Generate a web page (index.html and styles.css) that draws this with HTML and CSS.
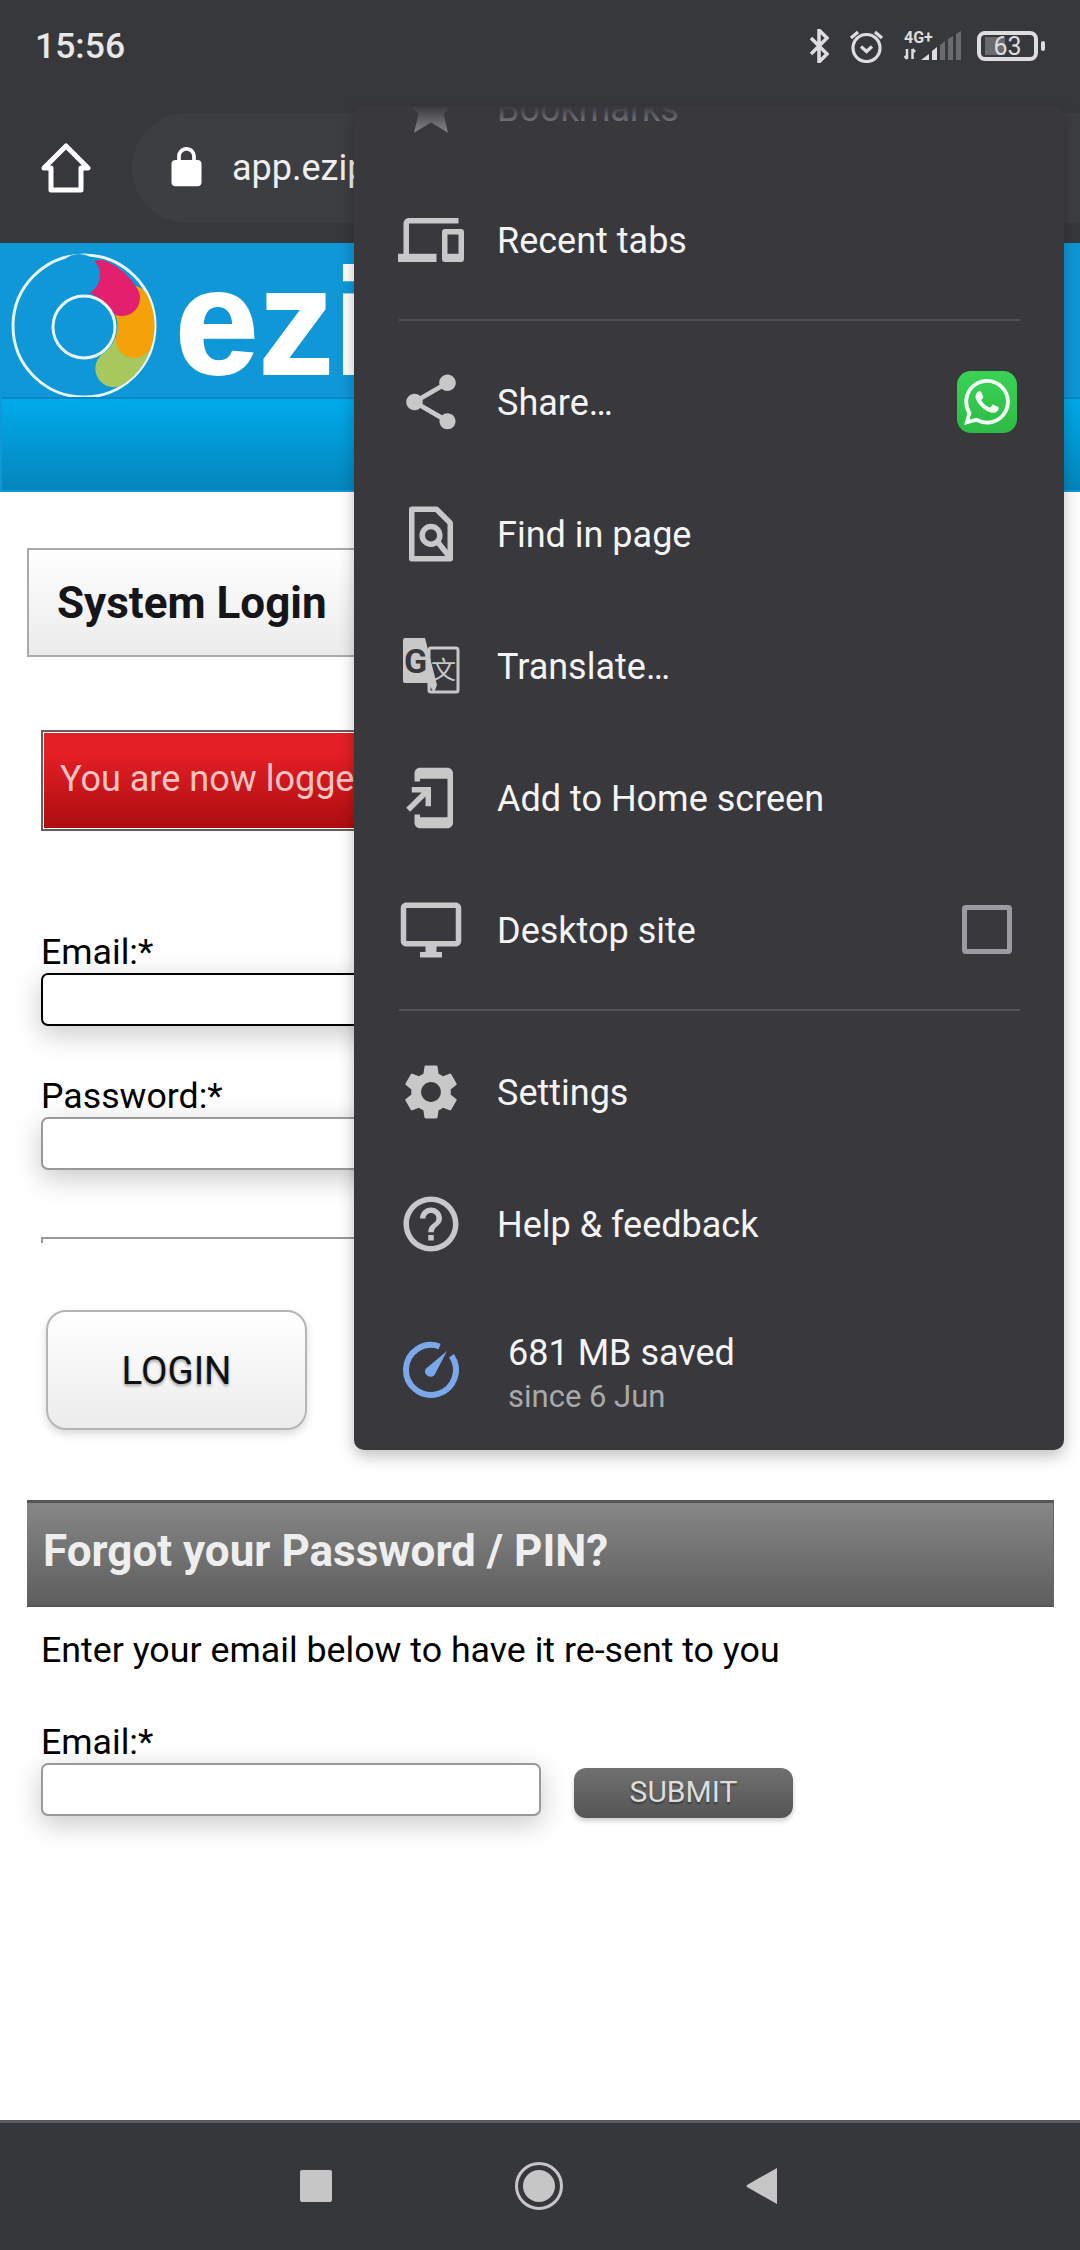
FILE: index.html
```html
<!DOCTYPE html>
<html lang="en">
<head>
    <meta charset="UTF-8">
    <meta name="viewport" content="width=device-width, initial-scale=1.0">
    <title>System Login</title>
    <link rel="stylesheet" href="styles.css">
</head>
<body>
    <div class="phone">
        <div class="status-bar">
            <span class="clock">15:56</span>
            <div class="status-icons">
                <svg class="icon-bt" viewBox="0 0 20 34"><path d="M2 9 18 25 10 33V1L18 9 2 25"/></svg>
                <svg class="icon-alarm" viewBox="0 0 35 34"><circle cx="17.5" cy="19" r="13.5"/><path d="M12 17.5 17.5 22.5 23 17.5M2 9 9 3M33 9 26 3"/></svg>
                <svg class="icon-signal" viewBox="0 0 58 34">
                    <text x="0" y="14">4G+</text>
                    <path class="arrows" d="M3 20V30M0.5 27 3 30M8.5 30V20M8.5 20 11 23"/>
                    <path class="on" d="M17 31l8-6v6zM28 31V22l5-4v13z"/>
                    <path class="off" d="M36 31V16l5-4v19zM44 31V10l5-3v24zM52 31V5l5-3v29z"/>
                </svg>
                <div class="battery"><span class="battery-fill"></span><span class="battery-num">63</span></div>
            </div>
        </div>

        <div class="toolbar">
            <svg class="icon-home" viewBox="0 0 50 50"><path d="M3 25 25 3 47 25H40V47H10V25Z"/></svg>
            <div class="omnibox">
                <svg class="icon-lock" viewBox="0 0 24 24"><path d="M18 8h-1V6c0-2.76-2.24-5-5-5S7 3.24 7 6v2H6c-1.1 0-2 .9-2 2v10c0 1.1.9 2 2 2h12c1.1 0 2-.9 2-2V10c0-1.1-.9-2-2-2zM9 6c0-1.66 1.34-3 3-3s3 1.34 3 3v2H9V6z"/></svg>
                <span class="url">app.ezip</span>
            </div>
        </div>

        <header class="site-header">
            <div class="brand">
                <svg class="logo" viewBox="0 0 150 150">
                    <circle class="logo-disc" cx="75" cy="75" r="71"/>
                    <path class="blob-green" d="M123.9 92.8A52 52 0 0 1 104.8 117.6"/>
                    <path class="blob-orange" d="M122.1 53A52 52 0 0 1 125.2 88.5"/>
                    <path class="blob-pink" d="M91 27A50 50 0 0 1 113 47"/>
                    <circle class="logo-cap" cx="70" cy="24" r="21"/>
                    <circle class="logo-hole" cx="75" cy="76" r="31"/>
                </svg>
                <span class="brand-name">ezi</span>
            </div>
            <div class="site-nav"></div>
        </header>

        <main class="content">
            <h1 class="page-title">System Login</h1>
            <div class="message">You are now logged in</div>

            <form class="login-form">
                <label class="field-label">Email:*</label>
                <input class="text-input focused" type="text">
                <label class="field-label next">Password:*</label>
                <input class="text-input" type="password">
                <div class="clipped-field"></div>
                <button class="login-btn" type="button">LOGIN</button>
            </form>

            <h2 class="forgot-title">Forgot your Password / PIN?</h2>
            <p class="forgot-text">Enter your email below to have it re-sent to you</p>
            <form class="forgot-form">
                <label class="field-label">Email:*</label>
                <div class="forgot-row">
                    <input class="text-input" type="text">
                    <button class="submit-btn" type="button">SUBMIT</button>
                </div>
            </form>
        </main>

        <nav class="nav-bar">
            <span class="nav-square"></span>
            <span class="nav-circle"><span></span></span>
            <svg class="nav-back" viewBox="0 0 31 36"><path d="M31 0V36L1 19Q0 18 1 17Z"/></svg>
        </nav>

        <div class="menu">
            <ul class="menu-list">
                <li class="menu-row">
                    <svg class="menu-icon" viewBox="0 0 24 24"><path d="M12 17.27L18.18 21l-1.64-6.97L22 9.24l-7.19-.61L12 2 9.19 8.63 2 9.24l5.46 4.79L5.82 21z"/></svg>
                    <span class="menu-label">Bookmarks</span>
                </li>
                <li class="menu-row">
                    <svg class="menu-icon" viewBox="0 0 24 24"><path d="M4 6h18V4H4c-1.1 0-2 .9-2 2v11H0v3h14v-3H4V6zm19 2h-6c-.55 0-1 .45-1 1v10c0 .55.45 1 1 1h6c.55 0 1-.45 1-1V9c0-.55-.45-1-1-1zm-1 9h-4v-7h4v7z"/></svg>
                    <span class="menu-label">Recent tabs</span>
                </li>
                <li class="menu-divider"></li>
                <li class="menu-row">
                    <svg class="menu-icon" viewBox="0 0 24 24"><path d="M18 16.08c-.76 0-1.44.3-1.96.77L8.91 12.7c.05-.23.09-.46.09-.7s-.04-.47-.09-.7l7.05-4.11c.54.5 1.25.81 2.04.81 1.66 0 3-1.34 3-3s-1.34-3-3-3-3 1.34-3 3c0 .24.04.47.09.7L8.04 9.81C7.5 9.31 6.79 9 6 9c-1.66 0-3 1.34-3 3s1.34 3 3 3c.79 0 1.5-.31 2.04-.81l7.12 4.16c-.05.21-.08.43-.08.65 0 1.61 1.31 2.92 2.92 2.92 1.61 0 2.92-1.31 2.92-2.92s-1.31-2.92-2.92-2.92z"/></svg>
                    <span class="menu-label">Share…</span>
                    <span class="whatsapp">
                        <svg viewBox="0 0 24 24"><path d="M17.472 14.382c-.297-.149-1.758-.867-2.03-.967-.273-.099-.471-.148-.67.15-.197.297-.767.966-.94 1.164-.173.199-.347.223-.644.075-.297-.15-1.255-.463-2.39-1.475-.883-.788-1.48-1.761-1.653-2.059-.173-.297-.018-.458.13-.606.134-.133.298-.347.446-.52.149-.174.198-.298.298-.497.099-.198.05-.371-.025-.52-.075-.149-.669-1.612-.916-2.207-.242-.579-.487-.5-.669-.51-.173-.008-.371-.01-.57-.01-.198 0-.52.074-.792.372-.272.297-1.04 1.016-1.04 2.479 0 1.462 1.065 2.875 1.213 3.074.149.198 2.096 3.2 5.077 4.487.709.306 1.262.489 1.694.625.712.227 1.36.195 1.871.118.571-.085 1.758-.719 2.006-1.413.248-.694.248-1.289.173-1.413-.074-.124-.272-.198-.57-.347m-5.421 7.403h-.004a9.87 9.87 0 01-5.031-1.378l-.361-.214-3.741.982.998-3.648-.235-.374a9.86 9.86 0 01-1.51-5.26c.001-5.45 4.436-9.884 9.888-9.884 2.64 0 5.122 1.03 6.988 2.898a9.825 9.825 0 012.893 6.994c-.003 5.45-4.437 9.884-9.885 9.884m8.413-18.297A11.815 11.815 0 0012.05 0C5.495 0 .16 5.335.157 11.892c0 2.096.547 4.142 1.588 5.945L.057 24l6.305-1.654a11.882 11.882 0 005.683 1.448h.005c6.554 0 11.89-5.335 11.893-11.893a11.821 11.821 0 00-3.48-8.413z"/></svg>
                    </span>
                </li>
                <li class="menu-row">
                    <svg class="menu-icon icon-find" viewBox="0 0 24 24"><path d="M5 3h9l5 5v13H5z"/><circle cx="12" cy="12.5" r="3.2"/><path d="M14.5 15 18.5 20"/></svg>
                    <span class="menu-label">Find in page</span>
                </li>
                <li class="menu-row">
                    <svg class="menu-icon icon-translate" viewBox="0 0 66 66">
                        <rect class="tr-back" x="31" y="15" width="29" height="44" rx="2"/>
                        <path class="tr-front" d="M7 5H27L39 52 36 60 30 50H7Q5 50 5 48V7Q5 5 7 5Z"/>
                        <text class="tr-g" x="6" y="40">G</text>
                        <text class="tr-zh" x="33" y="46">文</text>
                    </svg>
                    <span class="menu-label">Translate…</span>
                </li>
                <li class="menu-row">
                    <svg class="menu-icon" viewBox="0 0 24 24"><path d="M18 1.01L8 1c-1.1 0-2 .9-2 2v3h2V5h10v14H8v-1H6v3c0 1.1.9 2 2 2h10c1.1 0 2-.9 2-2V3c0-1.1-.9-1.99-2-1.99zM10 15h2V8H5v2h3.59L3 15.59 4.41 17 10 11.41V15z"/></svg>
                    <span class="menu-label">Add to Home screen</span>
                </li>
                <li class="menu-row">
                    <svg class="menu-icon" viewBox="0 0 24 24"><path d="M21 2H3c-1.1 0-2 .9-2 2v12c0 1.1.9 2 2 2h7v2H8v2h8v-2h-2v-2h7c1.1 0 2-.9 2-2V4c0-1.1-.9-2-2-2zm0 14H3V4h18v12z"/></svg>
                    <span class="menu-label">Desktop site</span>
                    <span class="checkbox"></span>
                </li>
                <li class="menu-divider"></li>
                <li class="menu-row">
                    <svg class="menu-icon" viewBox="0 0 24 24"><path d="M19.14 12.94c.04-.3.06-.61.06-.94 0-.32-.02-.64-.07-.94l2.03-1.58c.18-.14.23-.41.12-.61l-1.92-3.32c-.12-.22-.37-.29-.59-.22l-2.39.96c-.5-.38-1.03-.7-1.62-.94l-.36-2.54c-.04-.24-.24-.41-.48-.41h-3.84c-.24 0-.43.17-.47.41l-.36 2.54c-.59.24-1.13.57-1.62.94l-2.39-.96c-.22-.08-.47 0-.59.22L2.74 8.87c-.12.21-.08.47.12.61l2.03 1.58c-.05.3-.09.63-.09.94s.02.64.07.94l-2.03 1.58c-.18.14-.23.41-.12.61l1.92 3.32c.12.22.37.29.59.22l2.39-.96c.5.38 1.03.7 1.62.94l.36 2.54c.05.24.24.41.48.41h3.84c.24 0 .44-.17.47-.41l.36-2.54c.59-.24 1.13-.56 1.62-.94l2.39.96c.22.08.47 0 .59-.22l1.92-3.32c.12-.22.07-.47-.12-.61l-2.01-1.58zM12 15.6c-1.98 0-3.6-1.62-3.6-3.6s1.62-3.6 3.6-3.6 3.6 1.62 3.6 3.6-1.62 3.6-3.6 3.6z"/></svg>
                    <span class="menu-label">Settings</span>
                </li>
                <li class="menu-row">
                    <svg class="menu-icon" viewBox="0 0 24 24"><path d="M11 18h2v-2h-2v2zm1-16C6.48 2 2 6.48 2 12s4.48 10 10 10 10-4.48 10-10S17.52 2 12 2zm0 18c-4.41 0-8-3.59-8-8s3.59-8 8-8 8 3.59 8 8-3.59 8-8 8zm0-14c-2.21 0-4 1.79-4 4h2c0-1.1.9-2 2-2s2 .9 2 2c0 2-3 1.75-3 5h2c0-2.25 3-2.5 3-5 0-2.21-1.79-4-4-4z"/></svg>
                    <span class="menu-label">Help &amp; feedback</span>
                </li>
                <li class="menu-row saved-row">
                    <svg class="menu-icon icon-gauge" viewBox="0 0 66 66"><path class="gauge-ring" d="M53.5 18.7A25 25 0 1 1 41.6 9.5"/><path class="gauge-needle" d="M49 14 36.5 38A5.5 5.5 0 0 1 27.5 32Z"/></svg>
                    <div class="saved-text">
                        <span class="saved-title">681 MB saved</span>
                        <span class="saved-sub">since 6 Jun</span>
                    </div>
                </li>
            </ul>
        </div>
    </div>
</body>
</html>
```

FILE: styles.css
```css
:root {
    --bar-color: #37383c;
    --menu-color: #38383d;
    --icon-color: #c8c8c8;
}

* {
    box-sizing: border-box;
}

body {
    margin: 0;
    font-family: Roboto, "Liberation Sans", sans-serif;
    color: #000;
}

.phone {
    position: relative;
    display: flex;
    flex-direction: column;
    width: 1080px;
    height: 2250px;
    overflow: hidden;
    background-color: #fff;
}

/* status bar */

.status-bar {
    display: flex;
    justify-content: space-between;
    align-items: center;
    height: 92px;
    padding: 0 35px 0 35px;
    background-color: var(--bar-color);
}

.clock {
    font-size: 35.5px;
    font-weight: 500;
    color: #e8e8e8;
}

.status-icons {
    display: flex;
    align-items: center;
    gap: 20px;
}

.icon-bt {
    width: 20px;
    height: 34px;
    fill: none;
    stroke: #ddd;
    stroke-width: 3.5;
}

.icon-alarm {
    width: 35px;
    height: 34px;
    fill: none;
    stroke: #ddd;
    stroke-width: 3.2;
}

.icon-signal {
    width: 58px;
    height: 34px;
}

.icon-signal text {
    font-size: 16px;
    font-weight: 700;
    fill: #ddd;
}

.icon-signal .arrows {
    fill: none;
    stroke: #ddd;
    stroke-width: 2.5;
}

.icon-signal .on {
    fill: #ddd;
}

.icon-signal .off {
    fill: #6a6b6e;
}

.battery {
    position: relative;
    display: flex;
    justify-content: center;
    align-items: center;
    width: 61px;
    height: 30px;
    margin: 0 7px 0 -5px;
    border: 4px solid #ddd;
    border-radius: 8px;
}

.battery::after {
    content: "";
    position: absolute;
    left: 60px;
    top: 6px;
    width: 4px;
    height: 10px;
    border-radius: 2px;
    background-color: #ddd;
}

.battery-fill {
    position: absolute;
    left: 4px;
    top: 2px;
    bottom: 2px;
    width: 20px;
    background-color: #6a6b6e;
}

.battery-num {
    position: relative;
    font-size: 25px;
    color: #ddd;
}

/* browser toolbar */

.toolbar {
    display: flex;
    align-items: center;
    gap: 41px;
    height: 151px;
    padding: 0 0 0 41px;
    background-color: var(--bar-color);
}

.icon-home {
    flex: none;
    width: 50px;
    height: 50px;
    fill: none;
    stroke: #fff;
    stroke-width: 5;
    stroke-linejoin: round;
}

.omnibox {
    display: flex;
    flex: 1;
    align-items: center;
    gap: 23px;
    height: 110px;
    padding-left: 32px;
    border-radius: 55px 0 0 55px;
    background-color: #3c3e42;
}

.icon-lock {
    width: 45px;
    height: 45px;
    fill: #fff;
}

.url {
    font-size: 36px;
    color: #eee;
}

/* site header */

.site-header {
    flex: none;
    height: 249px;
    background-color: #0f97d8;
}

.brand {
    display: flex;
    align-items: center;
    height: 154px;
    padding: 12px 0 0 9px;
    overflow: hidden;
}

.logo {
    flex: none;
    width: 150px;
    height: 150px;
}

.logo-disc {
    fill: #0f97d8;
    stroke: #e8f6fc;
    stroke-width: 3;
}

.blob-green,
.blob-orange,
.blob-pink {
    fill: none;
    stroke-linecap: round;
}

.blob-green {
    stroke: #a6c85c;
    stroke-width: 37;
}

.blob-orange {
    stroke: #f5a20a;
    stroke-width: 37;
}

.blob-pink {
    stroke: #e2206e;
    stroke-width: 36;
}

.logo-cap {
    fill: #0f97d8;
}

.logo-hole {
    fill: #0f97d8;
    stroke: #e8f6fc;
    stroke-width: 3;
}

.brand-name {
    margin: -8px 0 0 16px;
    font-family: "Liberation Sans", sans-serif;
    font-size: 150px;
    font-weight: 700;
    line-height: 1;
    color: #fff;
    -webkit-text-stroke: 2px #fff;
}

.site-nav {
    height: 93px;
    margin-left: 2px;
    border-top: 2px solid #0b86c4;
    background: linear-gradient(#00abeb, #0585bc);
}

/* page content */

.content {
    flex: 1;
    padding: 56px 26px 0 27px;
}

.page-title {
    display: flex;
    align-items: center;
    height: 109px;
    margin: 0;
    padding-left: 28px;
    border: 2px solid #aaa;
    background: linear-gradient(#fff, #ebebeb);
    font-size: 44px;
    font-weight: 700;
    color: #15151a;
}

.message {
    display: flex;
    align-items: center;
    height: 101px;
    margin: 73px 0 0 14px;
    padding: 0 0 4px 17px;
    border: 2px solid #6f5a5a;
    outline: 1px solid #fff;
    outline-offset: -3px;
    background: linear-gradient(#e41f26 20%, #ac0d10);
    font-size: 36px;
    color: #ffc4c4;
}

.login-form {
    display: flex;
    flex-direction: column;
    align-items: flex-start;
    margin: 99px 0 0 14px;
}

.field-label {
    display: block;
    height: 42px;
    margin-bottom: 1px;
    font-size: 35.7px;
    line-height: 45px;
}

.field-label.next {
    margin-top: 48px;
}

.text-input {
    display: block;
    width: 500px;
    height: 53px;
    border: 2px solid #999;
    border-radius: 7px;
    outline: none;
    background-color: #fff;
    box-shadow: 0 8px 28px rgba(0, 0, 0, 0.22);
}

.text-input.focused {
    border-color: #000;
}

.clipped-field {
    width: 500px;
    height: 6px;
    margin-top: 67px;
    border-top: 2px solid #999;
    border-left: 2px solid #999;
}

.login-btn {
    width: 261px;
    height: 120px;
    margin: 67px 0 0 5px;
    border: 2px solid #b5b5b5;
    border-radius: 20px;
    background: linear-gradient(#fff, #ececec);
    box-shadow: 0 4px 8px rgba(0, 0, 0, 0.15);
    font-family: inherit;
    font-size: 38.5px;
    color: #111;
    text-shadow: 0 2px 3px rgba(0, 0, 0, 0.35);
}

.forgot-title {
    display: flex;
    align-items: center;
    height: 107px;
    margin: 70px 0 0;
    padding: 0 0 7px 16px;
    border-top: 3px solid #555;
    border-right: 1px solid #666;
    border-bottom: 2px solid #555;
    background: linear-gradient(#868686, #5e5e5e);
    font-size: 44px;
    font-weight: 700;
    color: #eee;
}

.forgot-text {
    height: 42px;
    margin: 21px 0 0 14px;
    font-size: 35.75px;
    line-height: 45px;
}

.forgot-form {
    margin: 50px 0 0 14px;
}

.forgot-form .field-label {
    margin-bottom: 1px;
}

.forgot-row {
    display: flex;
    align-items: flex-start;
    gap: 33px;
}

.submit-btn {
    width: 219px;
    height: 50px;
    margin-top: 5px;
    padding-bottom: 5px;
    border: none;
    border-radius: 12px;
    background: linear-gradient(#707070, #555);
    box-shadow: 0 3px 5px rgba(0, 0, 0, 0.2);
    font-family: inherit;
    font-size: 30px;
    color: #ddd;
    text-shadow: 0 2px 2px rgba(0, 0, 0, 0.4);
}

/* navigation bar */

.nav-bar {
    display: flex;
    flex: none;
    align-items: center;
    gap: 183px;
    height: 130px;
    padding: 0 0 2px 300px;
    border-top: 3px solid #5a5b60;
    background-color: #36373b;
}

.nav-square {
    width: 32px;
    height: 32px;
    border-radius: 2px;
    background-color: #c6c6c6;
}

.nav-circle {
    display: flex;
    justify-content: center;
    align-items: center;
    width: 48px;
    height: 48px;
    border: 3px solid #c6c6c6;
    border-radius: 50%;
}

.nav-circle span {
    width: 32px;
    height: 32px;
    border-radius: 50%;
    background-color: #c6c6c6;
}

.nav-back {
    width: 31px;
    height: 36px;
    fill: #c6c6c6;
}

/* overflow menu */

.menu {
    position: absolute;
    left: 354px;
    top: 106px;
    width: 710px;
    height: 1344px;
    overflow: hidden;
    border-radius: 10px;
    background-color: var(--menu-color);
    box-shadow: 0 6px 16px rgba(0, 0, 0, 0.25);
}

.menu::before {
    content: "";
    position: absolute;
    left: 0;
    right: 0;
    top: 0;
    z-index: 1;
    height: 34px;
    background: linear-gradient(var(--menu-color), rgba(56, 56, 61, 0.3));
}

.menu-list {
    margin: -64px 0 0;
    padding: 0;
    list-style-type: none;
}

.menu-row {
    display: flex;
    align-items: center;
    gap: 33px;
    height: 132px;
    padding: 0 47px 0 44px;
}

.menu-icon {
    flex: none;
    width: 66px;
    height: 66px;
    fill: var(--icon-color);
}

.menu-label {
    flex: 1;
    padding-top: 1px;
    font-size: 36px;
    color: #f4f4f4;
}

.menu-divider {
    height: 2px;
    margin: 13px 44px 15px 45px;
    background-color: #515156;
}

.whatsapp {
    display: flex;
    justify-content: center;
    align-items: center;
    width: 60px;
    height: 62px;
    border-radius: 14px;
    background: linear-gradient(#3ad256, #2dbb45);
}

.whatsapp svg {
    width: 46px;
    height: 46px;
    fill: #f2fff4;
}

.checkbox {
    width: 50px;
    height: 49px;
    margin: -2px 5px 0 0;
    border: 5px solid #9a9ca1;
    border-radius: 4px;
}

.icon-find {
    fill: none;
    stroke: var(--icon-color);
    stroke-width: 2;
    stroke-linejoin: round;
}

.tr-back {
    fill: none;
    stroke: var(--icon-color);
    stroke-width: 3;
}

.tr-front {
    fill: var(--icon-color);
}

.tr-g {
    font-size: 34px;
    font-weight: 700;
    fill: var(--menu-color);
}

.tr-zh {
    font-family: "Noto Sans CJK SC", sans-serif;
    font-size: 25px;
    fill: var(--icon-color);
}

.saved-row {
    height: 159px;
}

.icon-gauge {
    fill: none;
}

.gauge-ring {
    stroke: #7aa8ea;
    stroke-width: 6;
}

.gauge-needle {
    fill: #7aa8ea;
}

.saved-text {
    display: flex;
    flex-direction: column;
    margin: 6px 0 0 11px;
}

.saved-title {
    font-size: 36px;
    line-height: 48px;
    color: #f4f4f4;
}

.saved-sub {
    font-size: 31px;
    line-height: 40px;
    color: #aaa;
}
```
